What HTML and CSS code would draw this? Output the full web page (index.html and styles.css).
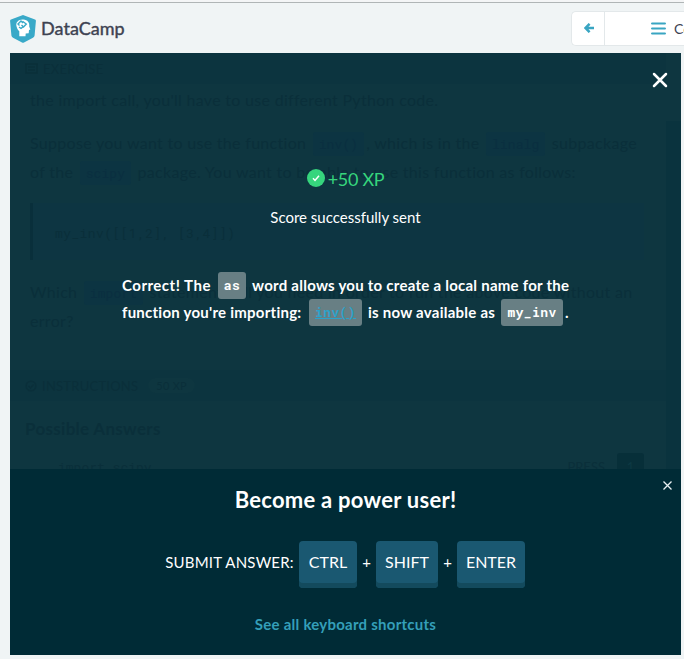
FILE: index.html
```html
<!DOCTYPE html>
<html lang="en">
<head>
<meta charset="utf-8">
<title>DataCamp</title>
<link rel="stylesheet" href="styles.css">
</head>
<body>
<header class="topbar">
  <div class="brand">
    <svg class="logo" width="26" height="28" viewBox="0 0 26 28"><path fill="#39a9c8" d="M13 0 25 4.6Q26 5 25.900 6L24.6 20.500Q24.400 22 23 22.800L14 27.500Q13 28 12 27.500L3 22.800Q1.600 22 1.400 20.500L.1 6Q0 5 1 4.600Z"/><path fill="#fff" d="M6.500 11.300C5.400 7 9 4.200 13.200 4.500c4.500.3 6.600 3.200 6 6.900l1.100 3.100-1.300.6-.3 3.100-3 .4-.2 2.600H9.300v-4.900c-1.400-1.400-2.500-3.200-2.800-5Z"/><path fill="none" stroke="#39a9c8" stroke-width="1.400" d="M9.500 10.500 8 9l3-3 2 2M12.500 6.200 16.300 9l-2.800 3-2-2M9 12l2 1.300 2.300-1.600"/></svg>
    <span class="brand-name">DataCamp</span>
  </div>
  <nav class="course-nav">
    <span class="nav-back"><svg width="10" height="10" viewBox="0 0 10 10"><path fill="none" stroke="#39a5c2" stroke-width="2.500" d="M5.600.8 1.500 5l4.100 4.200M1.800 5H10"/></svg></span>
    <span class="nav-outline"><svg width="15" height="13" viewBox="0 0 15 13"><path stroke="#39a5c2" stroke-width="2.200" stroke-linecap="round" d="M1.100 1.500h12.800M1.100 6.500h12.800M1.100 11.500h12.800"/></svg><span>Course Outline</span></span>
  </nav>
</header>
<main class="panel">
  <section class="exercise">
    <div class="section-bar"><svg width="13" height="11" viewBox="0 0 13 11"><path fill="none" stroke="currentColor" stroke-width="1.500" d="M0 1h13M1 1v9h11V1M3 4h7M3 7h7"/></svg><span class="bar-title">EXERCISE</span></div>
    <div class="exercise-text">
      <p>the import call, you'll have to use different Python code.</p>
      <p class="intro">Suppose you want to use the function <code>inv()</code>, which is in the <code>linalg</code> subpackage<br>of the <code>scipy</code> package. You want to be able to use this function as follows:</p>
      <pre>my_inv([[1,2], [3,4]])</pre>
      <p class="question">Which <code>import</code> statement will you need in order to run the above code without an<br>error?</p>
    </div>
    <div class="section-bar instructions"><svg width="12" height="12" viewBox="0 0 12 12"><circle cx="6" cy="6" r="4.800" fill="none" stroke="currentColor" stroke-width="1.500"/><path fill="none" stroke="currentColor" stroke-width="1.500" d="m3.500 6 2 2 3-3.500"/></svg><span class="bar-title">INSTRUCTIONS</span><span class="xp">50 XP</span></div>
    <h4>Possible Answers</h4>
    <div class="answer"><code>import scipy</code><span class="press">PRESS</span><span class="num">1</span></div>
  </section>
  <div class="scroll-track"></div>
  <div class="overlay">
    <button class="close" aria-label="Close"><svg width="16" height="16" viewBox="0 0 16 16"><path stroke="#fff" stroke-width="2.500" stroke-linecap="round" d="m2 2 12 12M14 2 2 14"/></svg></button>
    <div class="feedback">
      <div class="score"><svg width="18" height="18" viewBox="0 0 18 18"><circle cx="9" cy="9" r="9" fill="#36d57d"/><path fill="none" stroke="#fff" stroke-width="1.500" d="m6 9.300 2 2.100 4-4.700"/></svg><span>+50 XP</span></div>
      <div class="sent">Score successfully sent</div>
      <div class="message"><div class="line"><span class="t1">Correct! The</span><code>as</code><span class="t2">word allows you to create a local name for the</span></div><div class="line"><span class="t3">function you're importing:</span><code class="link">inv()</code><span class="t4">is now available as</span><code class="name">my_inv</code><span class="dot">.</span></div></div>
    </div>
    <div class="power">
      <button class="dismiss" aria-label="Dismiss"><svg width="9" height="9" viewBox="0 0 9 9"><path stroke="#e9f0f2" stroke-width="1.300" d="m.5.5 8 8M8.500.5l-8 8"/></svg></button>
      <h2>Become a power user!</h2>
      <div class="keys"><span class="submit">SUBMIT ANSWER:</span><kbd class="k1">CTRL</kbd><span class="plus">+</span><kbd class="k2">SHIFT</kbd><span class="plus">+</span><kbd class="k3">ENTER</kbd></div>
      <div class="shortcuts">See all keyboard shortcuts</div>
    </div>
  </div>
</main>
</body>
</html>
```

FILE: styles.css
```css
* { box-sizing: border-box; }
body { margin: 0; width: 684px; height: 659px; overflow: hidden; background: #f0f4f5; font-family: Lato, sans-serif; color: #3d4251; }
button { border: 0; background: none; padding: 0; line-height: 0; }
svg { display: block; flex: none; }
p, h2, h4, pre { margin: 0; }
code, pre { font-family: "Roboto Mono", "DejaVu Sans Mono", monospace; }

.topbar { height: 53px; border-top: 2px solid #f4f5f6; display: flex; justify-content: space-between; box-shadow: inset 0 1px #b0b5b6; overflow: hidden; }
.brand { display: flex; align-items: flex-start; padding: 13px 0 0 10px; }
.brand-name { margin: 1px 0 0 5px; font-size: 18px; line-height: 24px; font-weight: 400; -webkit-text-stroke: .4px #3d4251; letter-spacing: .05px; }
.course-nav { display: flex; width: 113px; height: 35px; margin-top: 9px; overflow: hidden; background: #fff; border: 1px solid #e3e8ea; border-right: 0; border-radius: 5px 0 0 5px; }
.nav-back { flex: 0 0 33px; display: flex; align-items: center; justify-content: center; border-right: 1px solid #e3e8ea; padding: 0 0 2px 1px; }
.nav-outline { display: flex; align-items: center; padding-left: 46px; gap: 8px; font-size: 14px; white-space: nowrap; }

.panel { position: relative; width: 671px; height: 602px; margin-left: 10px; overflow: hidden; background: #0e3640; display: flex; }
.exercise { width: 656px; flex: none; color: #0a2f3a; overflow: hidden; }
.scroll-track { flex: 1; margin-top: 68px; background: #0a333e; }
.section-bar { height: 31px; display: flex; align-items: center; padding-left: 15px; font-size: 13px; background: #0c343f; letter-spacing: .25px; }
.bar-title { margin-left: 5px; }
.exercise-text { height: 286px; padding: 1px 20px 0; font-size: 16px; line-height: 29px; letter-spacing: .3px; white-space: nowrap; }
.intro { margin-top: 14px; }
.exercise-text code { padding: 3px 6px; margin: 0 2px; font-size: 13px; line-height: 1; background: #0c3442; color: #0a2f40; border-radius: 3px; letter-spacing: .1px; }
pre { height: 57px; margin: 17px 2px 0 0; padding-left: 22px; border-left: 3px solid #092f3b; background: #0d3542; font-size: 13px; line-height: 60px; letter-spacing: .4px; }
.question { margin-top: 17px; }
.instructions .xp { margin-left: 10px; padding: 1px 8px; font-size: 11px; border-radius: 8px; background: #0e3640; }
h4 { padding: 17px 0 0 15px; font-size: 17px; line-height: 22px; letter-spacing: .3px; font-weight: 700; }
.answer { display: flex; align-items: flex-start; padding: 13px 22px 0 48px; font-size: 13px; line-height: 28px; }
.press { margin-left: auto; }
.num { width: 27px; margin-left: 12px; height: 28px; text-align: center; background: #072f39; border-radius: 3px; color: #0d3943; }

.overlay { position: absolute; inset: 0; display: flex; flex-direction: column; }
.close { position: absolute; right: 13px; top: 19px; }
.feedback { flex: 1; color: #fff; }
.score { display: flex; justify-content: center; align-items: center; height: 24px; margin-top: 113px; gap: 3px; font-size: 18px; letter-spacing: -.3px; color: #36d57d; }
.score span { padding-top: 1px; }
.sent { margin-top: 16px; text-align: center; font-size: 15px; line-height: 22px; }
.message { width: 448px; margin: 44px 0 0 112px; font-size: 15px; font-weight: 700; letter-spacing: .25px; }
.line { display: flex; height: 27px; align-items: center; white-space: nowrap; }
.line > span { line-height: 24px; padding-bottom: 1px; }
.t1 { width: 90px; letter-spacing: .5px; }
.t3 { width: 181px; }
.t4 { width: 127px; }
.message code { width: 28px; height: 27px; line-height: 27px; margin: 0 6px; border-radius: 3px; background: #687f84; font-size: 13px; letter-spacing: .4px; text-align: center; }
.message .link { width: 53px; color: #2aa3cb; text-decoration: underline; }
.message .name { width: 62px; margin-right: 2px; }

.power { position: relative; height: 186px; background: #002b36; color: #fff; text-align: center; }
.dismiss { position: absolute; right: 9px; top: 12px; }
h2 { padding-top: 17px; font-size: 22px; line-height: 28px; font-weight: 700; letter-spacing: .25px; }
.keys { display: flex; justify-content: center; height: 47px; margin-top: 27px; padding-right: 1px; font-size: 15px; line-height: 42px; }
kbd { height: 47px; font: 16px/42px Lato, sans-serif; background: #1a5871; border-radius: 4px; box-shadow: inset 0 -5px #134a5d; }
.submit { width: 129px; margin-right: 5px; white-space: nowrap; letter-spacing: .2px; }
.plus { width: 19px; }
.k1 { width: 58px; }
.k2 { width: 62px; }
.k3 { width: 68px; }
.shortcuts { margin-top: 25px; font-size: 15px; line-height: 22px; font-weight: 700; letter-spacing: .25px; color: #349fb9; }
```
